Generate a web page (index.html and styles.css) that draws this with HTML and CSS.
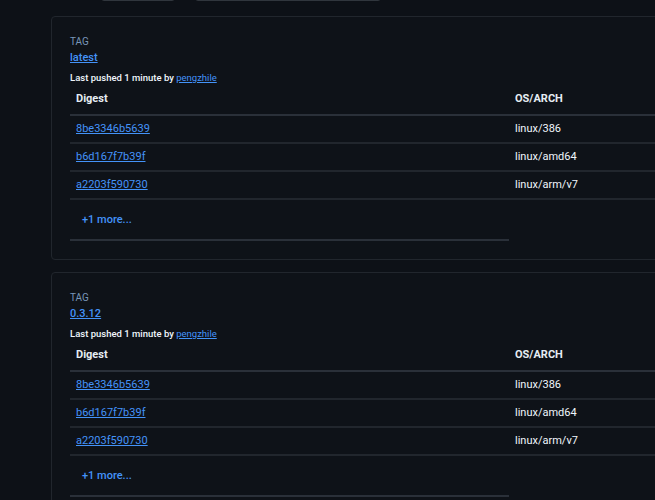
FILE: index.html
```html
<!DOCTYPE html>
<html lang="en">
<head>
<meta charset="UTF-8">
<meta name="viewport" content="width=device-width, initial-scale=1.0">
<title>Tags</title>
<link rel="stylesheet" href="styles.css">
</head>
<body>

<div class="page">

<div class="filters">
<input class="sort" value="">
<input class="search" value="">
</div>

<div class="tag-card">
<div class="label">TAG</div>
<a class="tag-name" href="#">latest</a>
<p class="pushed">Last pushed 1 minute by <a href="#">pengzhile</a></p>

<table>
<thead>
<tr>
<th class="c1">Digest</th>
<th class="c2">OS/ARCH</th>
</tr>
</thead>
<tbody>
<tr><td><a href="#">8be3346b5639</a></td><td>linux/386</td></tr>
<tr><td><a href="#">b6d167f7b39f</a></td><td>linux/amd64</td></tr>
<tr><td><a href="#">a2203f590730</a></td><td>linux/arm/v7</td></tr>
<tr><td class="more">+1 more...</td><td class="empty"></td></tr>
</tbody>
</table>
</div>

<div class="tag-card">
<div class="label">TAG</div>
<a class="tag-name" href="#">0.3.12</a>
<p class="pushed">Last pushed 1 minute by <a href="#">pengzhile</a></p>

<table>
<thead>
<tr>
<th class="c1">Digest</th>
<th class="c2">OS/ARCH</th>
</tr>
</thead>
<tbody>
<tr><td><a href="#">8be3346b5639</a></td><td>linux/386</td></tr>
<tr><td><a href="#">b6d167f7b39f</a></td><td>linux/amd64</td></tr>
<tr><td><a href="#">a2203f590730</a></td><td>linux/arm/v7</td></tr>
<tr><td class="more">+1 more...</td><td class="empty"></td></tr>
</tbody>
</table>
</div>

</div>

</body>
</html>
```

FILE: styles.css
```css
html,body{
margin:0;
background:#0d1117;
color:#e6edf3;
font-family:Roboto, "Liberation Sans", sans-serif;
overflow:hidden;
}

.page{
width:760px;
padding:0 0 0 51px;
}

.filters{
display:flex;
gap:20px;
margin:-28px 0 0 50px;
height:29px;
}

.filters input{
height:29px;
box-sizing:border-box;
background:#0d1117;
border:1px solid #30363d;
border-radius:3px;
padding:0;
}

.sort{
width:74px;
}

.search{
width:186px;
}

.tag-card{
border:1px solid #21262d;
border-radius:4px;
background:#0e1218;
padding:18px 18px 18px 18px;
margin-top:15px;
}

.tag-card + .tag-card{
margin-top:12px;
}

.label{
font-size:10px;
line-height:14px;
color:#7896b8;
}

.tag-name{
display:block;
width:fit-content;
margin-top:1px;
font-size:11px;
line-height:16px;
font-weight:500;
color:#4493f8;
}

.pushed{
font-size:9.5px;
line-height:14px;
font-weight:500;
margin:5px 0 0;
color:#f0f6fc;
}

.pushed a{
color:#4493f8;
font-weight:400;
}

table{
border-collapse:collapse;
margin-top:3px;
}

th{
text-align:left;
font-size:11px;
font-weight:700;
line-height:22px;
padding:0 6px 4px;
border-bottom:2px solid #2a3039;
}

.c1{
width:427px;
}

.c2{
width:250px;
}

td{
font-size:11px;
line-height:26px;
padding:0 6px;
border-bottom:2px solid #21262d;
color:#f0f6fc;
}

td a{
color:#4493f8;
}

.more{
line-height:39px;
padding-left:12px;
font-weight:500;
color:#4493f8;
border-bottom:2px solid #2a3039;
}

.empty{
border-bottom:none;
}
```
